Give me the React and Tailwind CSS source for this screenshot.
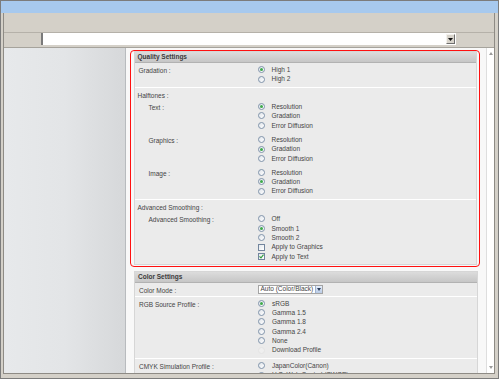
import React from 'react';

const Radio = ({ checked, disabled }) => (
    <span
        className={`shrink-0 w-[7px] h-[7px] rounded-full border flex items-center justify-center ${disabled ? 'border-[#e4e4e4] bg-[#efefef]' : 'border-[#8093aa] bg-linear-to-br from-[#dfe4ea] to-white'}`}
    >
        {checked && <span className="w-[3px] h-[3px] rounded-full bg-[#3ea94b]" />}
    </span>
);

const Check = ({ checked }) => (
    <span className="shrink-0 w-[7px] h-[7px] border border-[#72859d] bg-linear-to-br from-[#e4e8ec] to-white flex items-center justify-center">
        {checked && (
            <svg width="5" height="5" viewBox="0 0 5 5">
                <path d="M0.5 2.3 L2 3.9 L4.5 0.7" fill="none" stroke="#2f9d3e" strokeWidth="1.1" />
            </svg>
        )}
    </span>
);

const Option = ({ label, checked, box, disabled }) => (
    <div className="h-[9.4px] flex items-center gap-[7px]">
        {box ? <Check checked={checked} /> : <Radio checked={checked} disabled={disabled} />}
        <span>{label}</span>
    </div>
);

const Options = ({ items, selected }) => (
    <div>
        {items.map((it) => (
            <Option key={it} label={it} checked={it === selected} />
        ))}
    </div>
);

const Field = ({ label, sub, className = '', children }) => (
    <div className={`flex ${className}`}>
        <div className={`w-[123px] shrink-0 pt-[1px] ${sub ? 'pl-[14px]' : 'pl-[4px]'}`}>
            <div className="h-[9.4px] flex items-center">{label}</div>
        </div>
        <div className="flex-1">{children}</div>
    </div>
);

const Heading = ({ children }) => (
    <div className="h-[9.4px] flex items-center pl-[3px]">{children}</div>
);

const Section = ({ title, children }) => (
    <div className="bg-[#ebebeb] border border-[#d6d6d6]">
        <div className="h-[11px] bg-linear-to-b from-[#dcdcdc] to-[#c6c6c6] border-b border-[#b2b2b2] pl-[3px] flex items-center font-bold text-[#3a3a3a]">
            {title}
        </div>
        {children}
    </div>
);

const halftone = ['Resolution', 'Gradation', 'Error Diffusion'];

export default function App() {
    return (
        <div className="w-[499px] h-[379px] bg-[#d4d0c8] border border-[#7c7c7c] flex flex-col overflow-hidden font-['Liberation_Sans',Arial,sans-serif] text-[6.5px] leading-[9.4px] text-[#444] whitespace-nowrap">
            {/* title bar */}
            <div className="h-[12px] shrink-0 bg-[#a7c9ee]" />

            <div className="flex-1 pl-[2px] pr-[3px] pb-[4px] flex flex-col min-h-0">
                <div className="flex-1 flex flex-col border-l border-r border-b border-[#8e8b85] min-h-0">
                    {/* toolbar */}
                    <div className="h-[20px] shrink-0 border-b border-[#b5b1a9]" />

                    {/* address row */}
                    <div className="h-[12px] shrink-0 flex">
                        <div className="w-[37px]" />
                        <div className="w-[415px] bg-white border-l-2 border-l-[#7a7a7a] flex justify-end items-start pt-[1px] pr-[1px]">
                            <div className="w-[9px] h-[10px] bg-[#d8d4cc] border border-t-[#f4f2ee] border-l-[#f4f2ee] border-r-[#6e6e6e] border-b-[#6e6e6e] flex items-center justify-center">
                                <svg width="5" height="3" viewBox="0 0 5 3">
                                    <path d="M0 0 H5 L2.5 3 Z" fill="#111" />
                                </svg>
                            </div>
                        </div>
                    </div>
                    <div className="h-[2px] shrink-0" />
                    <div className="h-[1px] shrink-0 bg-[#a6a39c]" />

                    {/* main */}
                    <div className="flex-1 flex min-h-0">
                        {/* left nav */}
                        <div className="w-[122px] shrink-0 bg-linear-to-r from-[#e7e9eb] via-[#e3e5e7] to-[#d6d8da] border-r border-[#b8bbbe]" />

                        {/* content */}
                        <div className="w-[360px] shrink-0 bg-[#f8f8f8] overflow-hidden pt-[1.5px]">
                            <div className="ml-[4px] mr-[6.5px] border-[1.5px] border-[#ff1010] rounded-[4px] pl-[2.5px] pr-[1.5px] py-[0.5px]">
                                <Section title="Quality Settings">
                                    <Field label="Gradation :" className="pt-[2px] pb-[3px]">
                                        <Options items={['High 1', 'High 2']} selected="High 1" />
                                    </Field>
                                    <div className="border-t border-white pt-[3px] pb-[3px]">
                                        <Heading>Halftones :</Heading>
                                        <Field label="Text :" sub className="mt-[1.6px]">
                                            <Options items={halftone} selected="Resolution" />
                                        </Field>
                                        <Field label="Graphics :" sub className="mt-[5px]">
                                            <Options items={halftone} selected="Gradation" />
                                        </Field>
                                        <Field label="Image :" sub className="mt-[4.6px]">
                                            <Options items={halftone} selected="Gradation" />
                                        </Field>
                                    </div>
                                    <div className="border-t border-white pt-[2.7px] pb-[3px]">
                                        <Heading>Advanced Smoothing :</Heading>
                                        <Field label="Advanced Smoothing :" sub className="mt-[2.3px]">
                                            <Option label="Off" />
                                            <Option label="Smooth 1" checked />
                                            <Option label="Smooth 2" />
                                            <Option label="Apply to Graphics" box />
                                            <Option label="Apply to Text" box checked />
                                        </Field>
                                    </div>
                                </Section>
                            </div>

                            <div className="ml-[8px] mr-[8px] mt-[4px]">
                                <Section title="Color Settings">
                                    <div className="flex pt-[2.5px] pb-[2px]">
                                        <div className="w-[123px] shrink-0 pl-[4px] pt-[1px] flex items-center h-[9px]">Color Mode :</div>
                                        <div className="w-[65px] h-[9px] bg-white border border-[#a4a4a4] flex items-center overflow-hidden">
                                            <span className="flex-1 pl-[1.5px] leading-none overflow-hidden">Auto (Color/Black)</span>
                                            <span className="w-[7px] shrink-0 h-full bg-linear-to-b from-[#e6eefa] to-[#b9cbe6] border-l border-[#9fb2cf] flex items-center justify-center">
                                                <svg width="4" height="3" viewBox="0 0 4 3">
                                                    <path d="M0 0 H4 L2 3 Z" fill="#2c3e5a" />
                                                </svg>
                                            </span>
                                        </div>
                                    </div>
                                    <Field label="RGB Source Profile :" className="border-t border-white pt-[1.3px] pb-[3.5px]">
                                        <Option label="sRGB" checked />
                                        <Option label="Gamma 1.5" />
                                        <Option label="Gamma 1.8" />
                                        <Option label="Gamma 2.4" />
                                        <Option label="None" />
                                        <Option label="Download Profile" disabled />
                                    </Field>
                                    <Field label="CMYK Simulation Profile :" className="border-t border-white pt-[1.7px] pb-[3px]">
                                        <Option label="JapanColor(Canon)" />
                                        <Option label="U.S. Web Coated (SWOP)" />
                                    </Field>
                                </Section>
                            </div>
                        </div>

                        {/* scrollbar */}
                        <div className="w-[8px] shrink-0 bg-white border-l border-[#dedede] flex flex-col justify-between items-center py-[4px]">
                            <svg width="4" height="3" viewBox="0 0 4 3">
                                <path d="M0 3 H4 L2 0 Z" fill="#9a9a9a" />
                            </svg>
                            <svg width="4" height="3" viewBox="0 0 4 3">
                                <path d="M0 0 H4 L2 3 Z" fill="#9a9a9a" />
                            </svg>
                        </div>
                    </div>
                </div>
            </div>
        </div>
    );
}
